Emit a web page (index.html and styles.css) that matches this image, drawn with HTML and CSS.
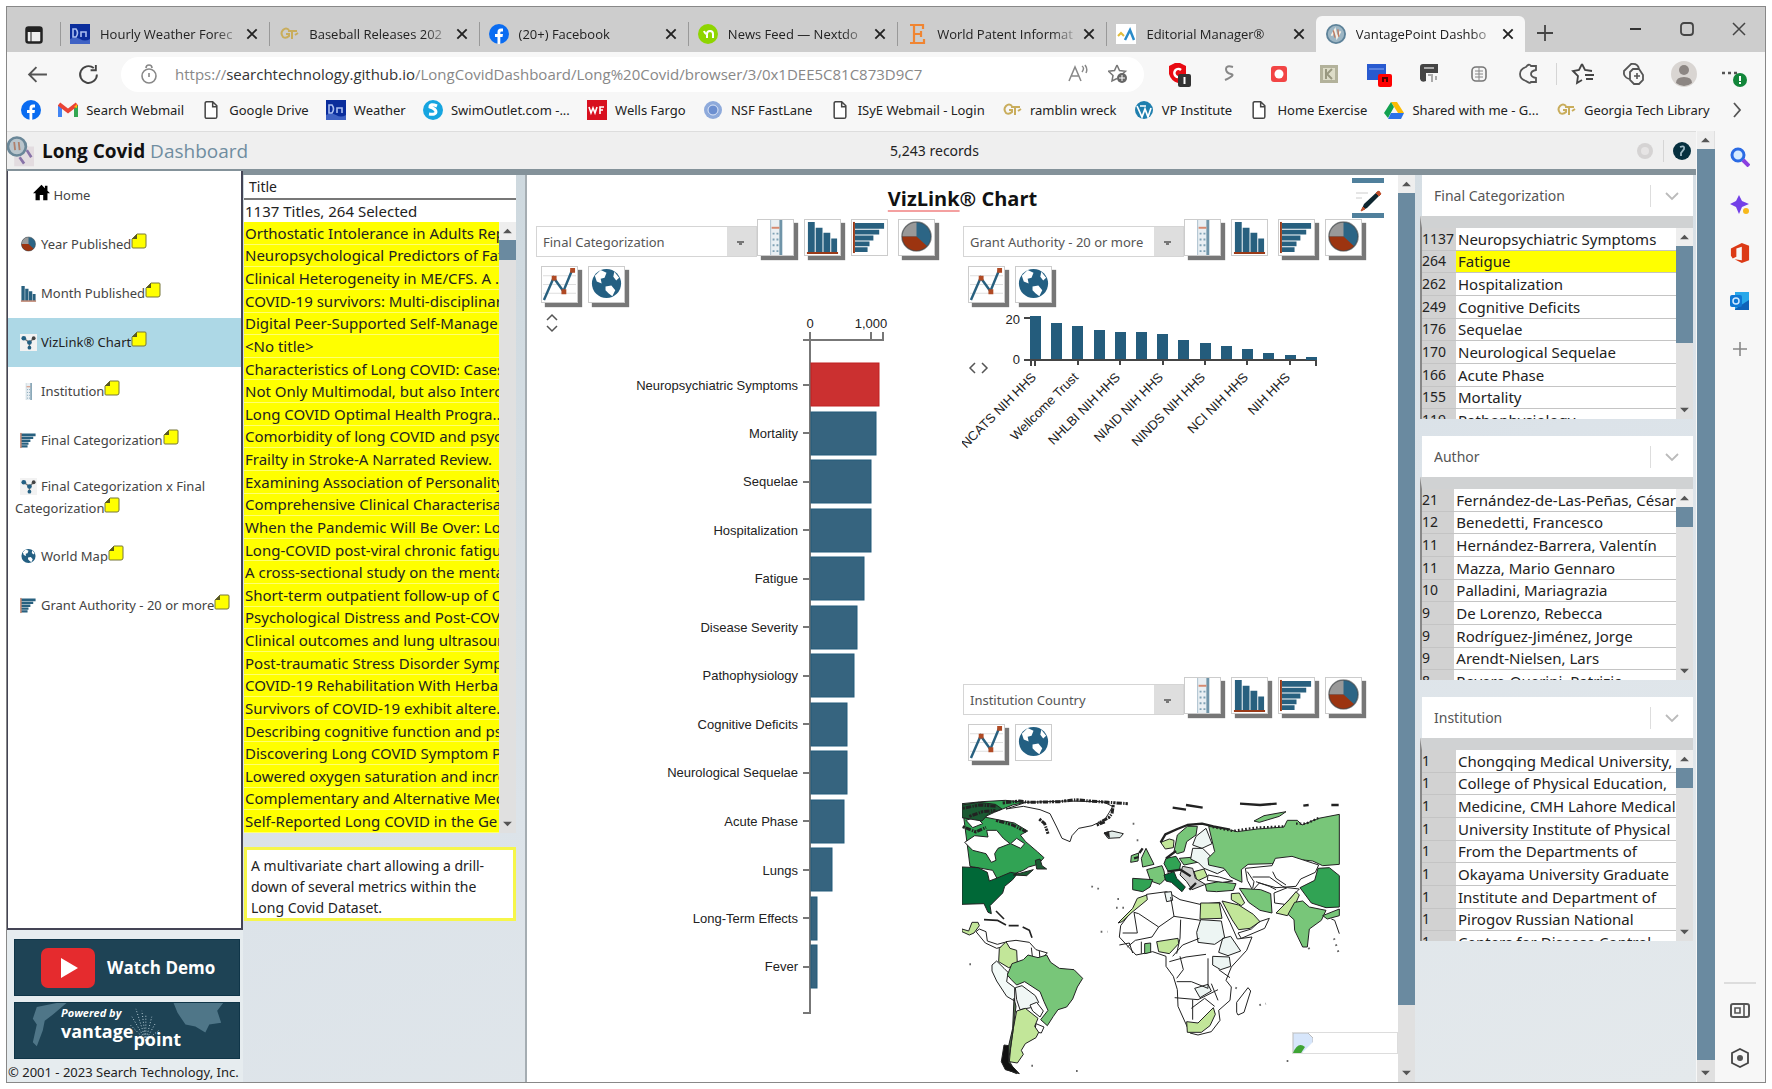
FILE: index.html
```html
<!DOCTYPE html>
<html lang="en">
<head>
<meta charset="utf-8">
<title>VantagePoint Dashboard</title>
<link rel="stylesheet" href="styles.css">
</head>
<body>
<svg class="defs" aria-hidden="true">
  <symbol id="x" viewBox="0 0 12 12"><path d="M2 2l8 8M10 2l-8 8" stroke="#222" stroke-width="1.6"/></symbol>
  <symbol id="doc" viewBox="0 0 20 24"><path d="M4 2h8l5 5v13q0 2-2 2H5q-2 0-2-2V4q0-2 2-2zM12 2v6h5" fill="#fff" stroke="#444" stroke-width="1.8"/></symbol>
  <symbol id="wx" viewBox="0 0 20 20"><path fill="#0a2d9c" d="M0 0h20v20H0z"/><path d="M0 20V15q5-3 10 0t10 0v5z" fill="#3f62c4"/><path d="M3 5v8h3q3-4 0-8zM11 13V8h5v5" fill="none" stroke="#a9bdf0" stroke-width="1.6"/></symbol>
  <symbol id="fb" viewBox="0 0 20 20"><circle cx="10" cy="10" r="10" fill="#0a6cf1"/><path d="M8.500 20v-7H6v-3h2.500V8q0-3.500 3.500-3.500h2v3h-1.500q-1.200 0-1.200 1.200V10H14l-.5 3h-2.200v7z" fill="#fff"/></symbol>
  <symbol id="gt" viewBox="0 0 20 16"><path d="M10 4Q7 1 4 4t0 7q3 2 6-1V8H7M9 5h9M13 5v8M16 9l3-2" fill="none" stroke="#c9ad5c" stroke-width="2"/></symbol>
  <symbol id="vp" viewBox="0 0 22 22"><circle cx="11" cy="11" r="10" fill="#9db6c4" stroke="#5d8299" stroke-width="2"/><path d="M6 13l4-7 2 9 4-7" stroke="#f5efe6" stroke-width="2" fill="none"/><path d="M8 7l2 8M13 6l1 8" stroke="#c07a60" stroke-width="1.500"/></symbol>
  <symbol id="up" viewBox="0 0 10 8"><path d="M1 6l4-4 4 4z" fill="#555"/></symbol>
  <symbol id="down" viewBox="0 0 10 8"><path d="M1 2l4 4 4-4z" fill="#555"/></symbol>
  <symbol id="chev" viewBox="0 0 14 10"><path d="M1 2l6 6 6-6" fill="none" stroke="#bbb" stroke-width="1.800"/></symbol>
  <symbol id="note" viewBox="0 0 16 16"><path d="M6 1h8q1 0 1 1v11q0 2-2 2H2q-1 0-1-1V6z" fill="#ff0" stroke="#77773a"/><path d="M1 6l5-5v5z" fill="#5a5a20"/></symbol>
  <symbol id="list" viewBox="0 0 36 36"><path fill="#fff" d="M0 0h36v36H0z"/><path d="M13 0h10v36H13z" fill="#e9eff3"/><path d="M22 0h3v36h-3z" fill="#6f94a8"/><path d="M13 0v36" stroke="#aac0cc"/><path d="M14 8h8" stroke="#d58a70" stroke-width="2"/><path d="M15 14h6M15 20h6M15 26h6M15 32h6" stroke="#7fa2b5" stroke-width="2" stroke-dasharray="2 2"/></symbol>
  <symbol id="cols" viewBox="0 0 36 36"><path fill="#fff" d="M0 0h36v36H0z"/><path d="M3 2h7v31H3zM11 8h7v25h-7zM19 13h7v20h-7zM27 19h6v14h-6z" fill="#28607f"/><path d="M2 34h32" stroke="#9a3a18" stroke-width="2"/></symbol>
  <symbol id="bars" viewBox="0 0 36 36"><path fill="#fff" d="M0 0h36v36H0z"/><path d="M3 3h30v6H3zM3 10h25v5H3zM3 16h19v5H3zM3 22h15v5H3zM3 28h13v5H3z" fill="#28607f"/><path d="M2 2v32" stroke="#9a3a18" stroke-width="2"/></symbol>
  <symbol id="pie" viewBox="0 0 36 36"><path fill="#fff" d="M0 0h36v36H0z"/><circle cx="18" cy="17" r="15" fill="#2c6585"/><path d="M18 17V2A15 15 0 0 0 3 17z" fill="#999"/><path d="M18 17H3A15 15 0 0 0 29 27z" fill="#9c3410"/><circle cx="18" cy="17" r="15" fill="none" stroke="#444" stroke-opacity=".6" stroke-width="1.500"/></symbol>
  <symbol id="line" viewBox="0 0 36 36"><path fill="#fff" d="M0 0h36v36H0z"/><path d="M1 9h34M1 18h34M1 27h34" stroke="#ddd"/><path d="M2 34L12 11l10 14L31 3" fill="none" stroke="#28607f" stroke-width="2.500"/><path d="M10 9h5v5h-5zM20 23h5v5h-5zM29 1h5v5h-5z" fill="#b04a24"/></symbol>
  <symbol id="globe" viewBox="0 0 36 36"><path fill="#fff" d="M0 0h36v36H0z"/><circle cx="18" cy="17" r="15" fill="#235f82"/><path d="M6 9l6-6 6 3-2 5-4 1 1 5-5-2zM17 20l6-1 4 5-3 6-4-3-3-3zM26 5l5 6-3 3-3-4z" fill="#fff"/></symbol>
  <symbol id="net" viewBox="0 0 36 36"><path fill="#f2f2f2" d="M0 0h36v36H0z"/><path d="M8 9l12 9 9-9M20 18v11" stroke="#777" stroke-width="3" fill="none"/><circle cx="8" cy="9" r="5" fill="#235f82"/><circle cx="20" cy="18" r="5" fill="#235f82"/><circle cx="29" cy="9" r="4" fill="#444"/><circle cx="20" cy="29" r="4" fill="#235f82"/></symbol>
</svg>

<div class="window">
  <header class="tabbar">
    <svg class="tabactions" viewBox="0 0 18 18"><rect x="1.500" y="1.500" width="15" height="15" rx="2" fill="#eee" stroke="#222" stroke-width="2.500"/><path d="M2 2h14v4H2z" fill="#222"/><path d="M6 6v10" stroke="#222"/></svg>
    <nav class="tabs" aria-label="Browser tabs">
      <a class="tab" href="#"><svg class="i20"><use href="#wx"/></svg><span>Hourly Weather Forec</span><svg class="i12"><use href="#x"/></svg></a>
      <a class="tab" href="#"><svg class="i20"><use href="#gt"/></svg><span>Baseball Releases 202</span><svg class="i12"><use href="#x"/></svg></a>
      <a class="tab" href="#"><svg class="i20"><use href="#fb"/></svg><span>(20+) Facebook</span><svg class="i12"><use href="#x"/></svg></a>
      <a class="tab" href="#"><svg class="i20" viewBox="0 0 20 20"><circle cx="10" cy="10" r="10" fill="#8ed500"/><path d="M6 7q1 3 3 3v4M9 10q0-3 3-3t3 3v4" fill="none" stroke="#fff" stroke-width="2"/></svg><span>News Feed — Nextdo</span><svg class="i12"><use href="#x"/></svg></a>
      <a class="tab" href="#"><svg class="i20" viewBox="0 0 20 20"><path d="M3 1h13v4M3 19h14v-4M7 1v18M7 10h7M14 7v6" fill="none" stroke="#f08532" stroke-width="2.200"/></svg><span>World Patent Informat</span><svg class="i12"><use href="#x"/></svg></a>
      <a class="tab" href="#"><svg class="i20" viewBox="0 0 20 20"><path fill="#fff" d="M0 0h20v20H0z"/><path d="M2 12l3-3 3 3" stroke="#e2bd3b" stroke-width="2" fill="none"/><path d="M9 16l5-10 4 10" stroke="#2a8bc9" stroke-width="2.500" fill="none"/></svg><span>Editorial Manager®</span><svg class="i12"><use href="#x"/></svg></a>
      <a class="tab active" href="#" aria-current="page"><svg class="i20"><use href="#vp"/></svg><span>VantagePoint Dashbo</span><svg class="i12"><use href="#x"/></svg></a>
    </nav>
    <div class="wincontrols">
      <button aria-label="New tab"><svg viewBox="0 0 16 16"><path d="M8 0v16M0 8h16" stroke="#444" stroke-width="1.800"/></svg></button>
      <span class="grow"></span>
      <button aria-label="Minimize"><svg viewBox="0 0 16 16"><path d="M3 8h11" stroke="#333" stroke-width="2"/></svg></button>
      <button aria-label="Maximize"><svg viewBox="0 0 16 16"><rect x="2" y="2" width="12" height="12" rx="3" fill="none" stroke="#444" stroke-width="1.800"/></svg></button>
      <button aria-label="Close"><svg viewBox="0 0 16 16"><path d="M2 2l12 12M14 2L2 14" stroke="#444" stroke-width="1.500"/></svg></button>
    </div>
  </header>

  <div class="toolbar">
    <button aria-label="Back"><svg viewBox="0 0 20 20"><path d="M19 10H2M9 3l-7 7 7 7" fill="none" stroke="#555" stroke-width="1.800"/></svg></button>
    <button aria-label="Reload"><svg viewBox="0 0 20 20"><path d="M18 10a8 8 0 1 1-3-6.200M17 1v5h-5" fill="none" stroke="#444" stroke-width="1.800"/></svg></button>
    <div class="url">
      <svg class="i20" viewBox="0 0 20 20"><circle cx="10" cy="12" r="7" fill="none" stroke="#888" stroke-width="1.600"/><path d="M7 4q0-3 3-3t3 3M10 9v4" fill="none" stroke="#888" stroke-width="1.600"/></svg>
      <div class="address" role="textbox" aria-label="Address">https://<b>searchtechnology.github.io</b>/LongCovidDashboard/Long%20Covid/browser/3/0x1DEE5C81C873D9C7</div>
      <svg class="i20" viewBox="0 0 20 20"><path d="M1 17L7 3l6 14M3 12h8M14 2q3 2 0 6M17 1q3 4 1 8" fill="none" stroke="#888" stroke-width="1.500"/></svg>
      <svg class="i20" viewBox="0 0 20 20"><path d="M9 1l2.500 5.500 6 .8-4.500 4M9 1L6.500 6.500l-6 .8 4.500 4.200L4 17l5-2.500" fill="none" stroke="#777" stroke-width="1.500"/><circle cx="14" cy="14" r="5" fill="#666"/><path d="M14 11v6M11 14h6" stroke="#fff"/></svg>
    </div>
    <div class="extensions">
      <svg viewBox="0 0 26 26"><path d="M3 5l6-3h5l6 3v8q-2 7-8 9-7-2-9-9z" fill="#e80a12"/><path d="M15 9a4 4 0 1 0 0 6" fill="none" stroke="#fff" stroke-width="2.500"/><rect x="12" y="13" width="13" height="13" rx="2" fill="#333"/><path d="M18.500 16v7" stroke="#fff" stroke-width="2"/></svg>
      <svg viewBox="0 0 26 26"><path d="M17 6q-7-2-7 2t5 5-6 6" fill="none" stroke="#888" stroke-width="2"/></svg>
      <svg viewBox="0 0 26 26"><rect x="5" y="5" width="16" height="16" rx="3" fill="#f24545"/><circle cx="13" cy="13" r="4.500" fill="#fff"/></svg>
      <svg viewBox="0 0 26 26"><rect x="4" y="4" width="18" height="18" fill="#b3b29b"/><path d="M7 7h12v12H7z" fill="#dddcc8"/><path d="M10 8v10M16 8l-5 5 5 5" fill="none" stroke="#999880" stroke-width="2"/></svg>
      <svg viewBox="0 0 26 26"><path d="M1 3h19v16H1z" fill="#285ad0"/><path d="M3 8h15" stroke="#89a8ef"/><rect x="12" y="13" width="14" height="13" rx="2" fill="#f00"/><path d="M17 21v-4h4v4" fill="none" stroke="#500" stroke-width="2"/></svg>
      <svg viewBox="0 0 26 26"><path d="M4 6q0-3 3-3h15v9H10v8q-5 2-6-2z" fill="#444"/><path d="M8 7h10M12 14h4v7M20 15v4" stroke="#aaa" stroke-width="2" fill="none"/></svg>
      <svg viewBox="0 0 26 26"><rect x="6" y="6" width="14" height="14" rx="4" fill="none" stroke="#777" stroke-width="1.600"/><path d="M9 10h8M9 13h8M9 16h8M13 6v14" stroke="#888"/></svg>
      <svg viewBox="0 0 26 26"><path d="M20 5h-5q-2-3-5 1Q4 8 4 13t6 7q4 3 5 1h5v-4q-5-1-5-4t5-4z" fill="none" stroke="#555" stroke-width="1.800"/></svg>
      <i class="vsep"></i>
      <svg viewBox="0 0 26 26"><path d="M11 3l3 6 7 1M11 3L8 9l-6 1 5 5-1 7 5-3M14 14h9M15 18h7" fill="none" stroke="#444" stroke-width="1.800"/></svg>
      <svg viewBox="0 0 26 26"><path d="M8 18q-6-2-5-8l7-7q7-1 8 5M9 11l3-3h6l4 6v5l-4 4h-5l-4-4z" fill="none" stroke="#555" stroke-width="1.800"/><path d="M16 12v6M13 15h6" stroke="#555" stroke-width="1.600"/></svg>
      <svg viewBox="0 0 26 26"><circle cx="13" cy="13" r="13" fill="#d9d5d2"/><circle cx="13" cy="9" r="5" fill="#8c8683"/><path d="M5 22q0-6 8-6t8 6q-8 6-16 0z" fill="#8c8683"/></svg>
      <svg viewBox="0 0 26 26"><path d="M1 12h3M7 12h3M13 12h3" stroke="#555" stroke-width="2.500"/><circle cx="19" cy="19" r="7" fill="#12863a"/><path d="M19 15v5M19 21v2" stroke="#fff" stroke-width="2"/></svg>
    </div>
  </div>

  <nav class="bookmarks" aria-label="Bookmarks">
    <a href="#" aria-label="Facebook"><svg class="i20"><use href="#fb"/></svg></a>
    <a href="#"><svg class="i20" viewBox="0 0 20 20"><path d="M2 17V5" stroke="#4285f4" stroke-width="4"/><path d="M18 17V5" stroke="#34a853" stroke-width="4"/><path d="M1 4l9 7 9-7" fill="none" stroke="#ea4335" stroke-width="4"/><path d="M16 7l3-3v4z" fill="#fbbc04"/></svg>Search Webmail</a>
    <a href="#"><svg class="i20"><use href="#doc"/></svg>Google Drive</a>
    <a href="#"><svg class="i20"><use href="#wx"/></svg>Weather</a>
    <a href="#"><svg class="i20" viewBox="0 0 20 20"><circle cx="10" cy="10" r="10" fill="#16a5e0"/><path d="M14 6q-7-3-7 1 6 2 6 5t-7 2" stroke="#fff" stroke-width="3" fill="none"/></svg>SwimOutlet.com -...</a>
    <a href="#"><svg class="i20" viewBox="0 0 20 20"><path fill="#d8101f" d="M0 0h20v20H0z"/><path d="M2 7l2 6 2-5 2 5 2-6M13 14V7h4M13 10h3" fill="none" stroke="#fff" stroke-width="1.600"/></svg>Wells Fargo</a>
    <a href="#"><svg class="i20" viewBox="0 0 20 20"><circle cx="10" cy="10" r="9" fill="#8eaadb"/><circle cx="10" cy="10" r="5" fill="#6c8fd0" stroke="#dce6f8"/></svg>NSF FastLane</a>
    <a href="#"><svg class="i20"><use href="#doc"/></svg>ISyE Webmail - Login</a>
    <a href="#"><svg class="i20"><use href="#gt"/></svg>ramblin wreck</a>
    <a href="#"><svg class="i20" viewBox="0 0 20 20"><circle cx="10" cy="10" r="9" fill="#1f7fae"/><path d="M3 6l5 11 3-8 3 8 3-9M6 6h6" fill="none" stroke="#fff" stroke-width="1.700"/></svg>VP Institute</a>
    <a href="#"><svg class="i20"><use href="#doc"/></svg>Home Exercise</a>
    <a href="#"><svg class="i20" viewBox="0 0 20 20"><path d="M7 2h6l7 11h-6z" fill="#fbbc04"/><path d="M7 2l3 5-6 11-4-5z" fill="#12a150"/><path d="M7 13h13l-3 6H4z" fill="#2a72e8"/></svg>Shared with me - G...</a>
    <a href="#"><svg class="i20"><use href="#gt"/></svg>Georgia Tech Library</a>
    <button aria-label="More bookmarks"><svg class="i20" viewBox="0 0 20 20"><path d="M7 3l6 7-6 7" fill="none" stroke="#555" stroke-width="1.800"/></svg></button>
  </nav>

  <div class="viewport">
    <div class="app">
      <header class="apphead">
        <svg class="logo" viewBox="0 0 30 34"><path d="M8 12h22v22H8z" fill="#e3dce0"/><path d="M14 24l5 7M22 16l5 8" stroke="#8873a8" stroke-width="3"/><circle cx="11" cy="12" r="10" fill="#b9c5cc" stroke="#6a8798" stroke-width="3"/><path d="M8 7l1 9M13 7l1 9" stroke="#b0806c" stroke-width="2"/></svg>
        <h1>Long Covid <span>Dashboard</span></h1>
        <p class="records">5,243 records</p>
        <svg class="i20" viewBox="0 0 20 20"><circle cx="10" cy="10" r="8" fill="#d5d3d3"/><circle cx="10" cy="10" r="4" fill="#e6e4e4"/></svg>
        <i class="vsep"></i>
        <svg class="i20" viewBox="0 0 20 20"><circle cx="10" cy="10" r="9" fill="#06303f"/><path d="M8 6q5-2 4 2l-3 4v3" fill="none" stroke="#9db9c4" stroke-width="1.800"/></svg>
      </header>

      <div class="columns">
        <aside class="left">
          <nav class="menu" aria-label="Views">
            <a class="home" href="#"><svg viewBox="0 0 20 18"><path d="M10 0l4 4V1h3v6l3 3h-3v8h-5v-6H8v6H3v-8H0z" fill="#000"/></svg> Home</a>
            <a href="#"><svg><use href="#pie"/></svg>Year Published<svg class="note"><use href="#note"/></svg></a>
            <a href="#"><svg><use href="#cols"/></svg>Month Published<svg class="note"><use href="#note"/></svg></a>
            <a class="current" href="#"><svg><use href="#net"/></svg>VizLink® Chart<svg class="note"><use href="#note"/></svg></a>
            <a href="#"><svg><use href="#list"/></svg>Institution<svg class="note"><use href="#note"/></svg></a>
            <a href="#"><svg><use href="#bars"/></svg>Final Categorization<svg class="note"><use href="#note"/></svg></a>
            <a class="two" href="#"><svg><use href="#net"/></svg>Final Categorization x Final Categorization<svg class="note"><use href="#note"/></svg></a>
            <a href="#"><svg><use href="#globe"/></svg>World Map<svg class="note"><use href="#note"/></svg></a>
            <a href="#"><svg><use href="#bars"/></svg>Grant Authority - 20 or more<svg class="note"><use href="#note"/></svg></a>
          </nav>
          <a class="banner" href="#"><svg viewBox="0 0 54 40"><rect width="54" height="40" rx="7" fill="#e52b2e"/><path d="M20 10l17 10-17 10z" fill="#fff"/></svg>Watch Demo</a>
          <a class="banner powered" href="#">
            <svg class="art" viewBox="0 0 226 56" preserveAspectRatio="none"><path d="M160 0h50l-6 8 4 12-12 2-4 8-10-6-10-2-8-12zM22 4l20-4h10L38 12l-8 6-2 10-6 16-4-4 4-18-4-6z" fill="#4f7688"/><g stroke="#b8ccd5" stroke-dasharray="1 2"><path d="M132 38L122 6M132 38l-4-30M132 38V12M132 38l6-24M132 38l10-18M132 38L118 14M132 38l-16-16M132 38l13-10"/></g></svg>
            <span class="by">Powered by</span><span class="vant">vantage<span>point</span></span>
          </a>
          <small>© 2001 - 2023 Search Technology, Inc.</small>
        </aside>

        <section class="titles">
          <h2>Title</h2>
          <p class="count">1137 Titles, 264 Selected</p>
          <div class="scroller">
            <ul>
              <li>Orthostatic Intolerance in Adults Rep</li><li>Neuropsychological Predictors of Fat</li><li>Clinical Heterogeneity in ME/CFS. A ..</li><li>COVID-19 survivors: Multi-disciplinar</li><li>Digital Peer-Supported Self-Manage</li><li>&lt;No title&gt;</li><li>Characteristics of Long COVID: Cases</li><li>Not Only Multimodal, but also Interc</li><li>Long COVID Optimal Health Progra..</li><li>Comorbidity of long COVID and psyc</li><li>Frailty in Stroke-A Narrated Review.</li><li>Examining Association of Personality</li><li>Comprehensive Clinical Characterisa</li><li>When the Pandemic Will Be Over: Lo</li><li>Long-COVID post-viral chronic fatigu</li><li>A cross-sectional study on the menta</li><li>Short-term outpatient follow-up of C</li><li>Psychological Distress and Post-COV</li><li>Clinical outcomes and lung ultrasour</li><li>Post-traumatic Stress Disorder Symp</li><li>COVID-19 Rehabilitation With Herba</li><li>Survivors of COVID-19 exhibit altere..</li><li>Describing cognitive function and ps</li><li>Discovering Long COVID Symptom P</li><li>Lowered oxygen saturation and incre</li><li>Complementary and Alternative Med</li><li>Self-Reported Long COVID in the Ge</li>
            </ul>
            <div class="sb"><svg><use href="#up"/></svg><i class="thumb t20"></i><svg><use href="#down"/></svg></div>
          </div>
          <p class="desc">A multivariate chart allowing a drill-down of several metrics within the Long Covid Dataset.</p>
        </section>

        <main class="main">
          <div class="canvas">
            <h2><u>VizLink</u>® Chart</h2>
            <button class="edit" aria-label="Edit"><svg viewBox="0 0 32 40"><path fill="#fff" d="M0 0h32v40H0z"/><path d="M0 0h32v5H0zM0 35h32v5H0z" fill="#50809c"/><path d="M4 15h12M4 20h6" stroke="#ccc"/><path d="M9 33l3-7L26 13l3 3-14 14z" fill="#0e2630"/><path d="M24 15l3-2 2 3-2 2zM9 33l2-4 2 2z" fill="#c0502c" stroke="#c0502c"/></svg></button>
            <div class="widgets">
              <section class="widget tall">
                <div class="tools">
                  <select aria-label="Left field"><option>Final Categorization</option></select>
                  <button aria-label="List"><svg><use href="#list"/></svg></button><button aria-label="Column chart"><svg><use href="#cols"/></svg></button><button class="on" aria-label="Bar chart"><svg><use href="#bars"/></svg></button><button aria-label="Pie chart"><svg><use href="#pie"/></svg></button><button aria-label="Line chart"><svg><use href="#line"/></svg></button><button aria-label="Map"><svg><use href="#globe"/></svg></button>
                </div>
                <svg class="chart" width="420" height="710" viewBox="535 310 420 710">
                  <path d="M547 322l5-5 5 5M547 328l5 5 5-5" fill="none" stroke="#555" stroke-width="1.500"/>
                  <path d="M803 342h80v-8M871 342v-8M810 334v681h-7" fill="none" stroke="#777" stroke-width="2"/>
                  <g fill="#36647f" stroke="#235a7a" stroke-width="1">
                    <rect x="811" y="365" width="68" height="43" fill="#cb3030" stroke="#c02020"/><rect x="811" y="414" width="65" height="43"/><rect x="811" y="462" width="60" height="43"/><rect x="811" y="511" width="60" height="43"/><rect x="811" y="559" width="53" height="43"/><rect x="811" y="608" width="46" height="43"/><rect x="811" y="656" width="43" height="43"/><rect x="811" y="705" width="36" height="43"/><rect x="811" y="753" width="36" height="43"/><rect x="811" y="802" width="33" height="43"/><rect x="811" y="850" width="21" height="43"/><rect x="811" y="899" width="6" height="43"/><rect x="811" y="947" width="6" height="43"/>
                  </g>
                  <path d="M803 387h7M803 435h7M803 484h7M803 532h7M803 581h7M803 629h7M803 678h7M803 726h7M803 775h7M803 823h7M803 872h7M803 920h7M803 969h7" stroke="#777" stroke-width="2"/>
                  <g class="lbl"><text x="810" y="330" text-anchor="middle">0</text><text x="871" y="330" text-anchor="middle">1,000</text></g>
                  <g class="lbl" text-anchor="end"><text x="798" y="392">Neuropsychiatric Symptoms</text><text x="798" y="440">Mortality</text><text x="798" y="488">Sequelae</text><text x="798" y="537">Hospitalization</text><text x="798" y="585">Fatigue</text><text x="798" y="634">Disease Severity</text><text x="798" y="682">Pathophysiology</text><text x="798" y="731">Cognitive Deficits</text><text x="798" y="779">Neurological Sequelae</text><text x="798" y="828">Acute Phase</text><text x="798" y="877">Lungs</text><text x="798" y="925">Long-Term Effects</text><text x="798" y="973">Fever</text></g>
                </svg>
              </section>
              <section class="widget">
                <div class="tools">
                  <select aria-label="Top right field"><option>Grant Authority - 20 or more</option></select>
                  <button aria-label="List"><svg><use href="#list"/></svg></button><button class="on" aria-label="Column chart"><svg><use href="#cols"/></svg></button><button aria-label="Bar chart"><svg><use href="#bars"/></svg></button><button aria-label="Pie chart"><svg><use href="#pie"/></svg></button><button aria-label="Line chart"><svg><use href="#line"/></svg></button><button aria-label="Map"><svg><use href="#globe"/></svg></button>
                </div>
                <svg class="chart" width="400" height="150" viewBox="963 310 400 150">
                  <path d="M976 365l-5 5 5 5M983 365l5 5-5 5" fill="none" stroke="#555" stroke-width="1.500"/>
                  <path d="M1025 320h8M1025 362h292v6M1032 362v6M1036 362v6M1079 362v5M1121 362v5M1164 362v5M1206 362v5M1248 362v5M1291 362v5" fill="none" stroke="#444" stroke-width="2"/>
                  <path fill="#245c7c" d="M1031 318h11v43h-11zM1052 325h11v36h-11zM1073 328h11v33h-11zM1095 332h11v29h-11zM1116 334h11v27h-11zM1137 334h11v27h-11zM1158 336h11v25h-11zM1179 342h11v19h-11zM1201 345h11v16h-11zM1222 348h11v13h-11zM1243 351h11v10h-11zM1264 355h11v6h-11zM1286 357h11v4h-11zM1307 359h11v3h-11z"/>
                  <g class="lbl" text-anchor="end"><text x="1021" y="326">20</text><text x="1021" y="366">0</text>
                  <text transform="translate(1038 380) rotate(-45)">NCATS NIH HHS</text><text transform="translate(1080 380) rotate(-45)">Wellcome Trust</text><text transform="translate(1122 380) rotate(-45)">NHLBI NIH HHS</text><text transform="translate(1165 380) rotate(-45)">NIAID NIH HHS</text><text transform="translate(1207 380) rotate(-45)">NINDS NIH HHS</text><text transform="translate(1250 380) rotate(-45)">NCI NIH HHS</text><text transform="translate(1292 380) rotate(-45)">NIH HHS</text></g>
                </svg>
              </section>
              <section class="widget">
                <div class="tools">
                  <select aria-label="Bottom right field"><option>Institution Country</option></select>
                  <button aria-label="List"><svg><use href="#list"/></svg></button><button aria-label="Column chart"><svg><use href="#cols"/></svg></button><button aria-label="Bar chart"><svg><use href="#bars"/></svg></button><button aria-label="Pie chart"><svg><use href="#pie"/></svg></button><button aria-label="Line chart"><svg><use href="#line"/></svg></button><button class="on" aria-label="Map"><svg><use href="#globe"/></svg></button>
                </div>
                <svg class="map" width="378" height="283" viewBox="68 410 1134 849">
                  <g stroke="#222" stroke-width="3" stroke-linejoin="round" fill="#fff">
                    <!-- North America -->
                    <path fill="#31a354" d="M68 436l60-6 70-4 62 6-40 8-30 12-25 10-30 14 40 8 50 10 40 24-22 12 16 20 35 30 20 18-18 20-28 8-16 10-32 12-24 8-20 10-16-30-68-12z"/>
                    <path d="M76 552l30-20 40 4-4-20 30 0 20 24 20 16-36 14-10 16 4 20-14 6-16-26-40-10zM80 486l30-10 20 20-30 12zM232 540l24 16-12 14-30-14z"/>
                    <path fill="#006837" d="M68 626l48 2 28 14 6 26 26-10 38-16 20 4-14 18-24 20-6 20-24 24-14 14 4 24-10-4-12-26-66 2z"/>
                    <path fill="#1a5a32" d="M288 606l14-4 6 20 14 10-30 0zM68 440l50-8 50 6 20 14-40 14-20 22-60-10zM222 650l60-16-20 18z"/>
                    <path d="M200 452l60-20 120-4 110 2 30 14-10 18-14 22-38 18-40 8-20 22-6 18-24-10-16-34-20-40-30-12-50-10z"/>
                    <path fill="none" stroke-width="9" stroke-dasharray="7 3 16 4 4 3" d="M190 434l50-6 30 4 90-2 50-6 40 4 56 4 60 4M70 450l50-10 50 4M90 474l40-14 40-4M70 505l40 16 30-14M170 486l50 14 40 20M300 482l16 14 10 30M522 440l-4 26-10 12-30 16M472 500l26-10"/>
                    <path d="M494 524l24-6 34 8-10 12-36 2z" fill="#e2ece9"/><path d="M494 524l14-4 2 18z" fill="#222"/>
                    <!-- Central America -->
                    <path fill="none" stroke-width="5" d="M134 784l40 2 26 14M170 758l24 24M208 802l30 0M250 806l20 10 8 22"/>
                    <path fill="#c2e699" d="M68 812l20 6 10-26 18 0 4 10-16 22-14 6-22-10z"/>
                    <path d="M120 812l20 8 4 28 30 10 22-6-2 12-22 6-34-16-28-34z"/>
                    <!-- South America -->
                    <path d="M200 850l30-4 40 6 20 22 34 10-28 26-42 4-30-6-24-26zM276 868l4 34M300 878l2 26"/>
                    <path fill="#c2e699" d="M180 870l20-20 12 20 20 6 2 40-26 12-30-18z"/>
                    <path fill="#f3faf8" d="M158 920l14-12 22 22 12 12-4 28 24 18 0 40-24-14-30-46-14-30z"/>
                    <path fill="#f0f7f5" d="M228 988l20-6 40 30 10 20-24 16-32 6-10-30z"/>
                    <path fill="#78c679" d="M204 950l14-34 34-12 14-14 30 8 26-8 12 22 26 18 44 4 26 26-16 26-14 36-18 24-26 8-14 20-18 28-20-18 22-28-12-26-12-30-46-30-24 10-16-16z"/>
                    <path d="M272 1040l20-8 20 26-10 18-22-18zM290 1096l24 10-8 18-20-4z"/>
                    <path fill="#c2e699" d="M232 1058l26-8 38 30-10 24 12 18-8 16-32 18-12 20 6 12-18 26-24-4 4-40 8-60z"/>
                    <path d="M224 1020l-4 90-16 70-12 40 12 14 28 12-10-16-14-26 12-80 10-80z" fill="#557650"/><path d="M194 1160l-8 50 12 24 42 12-32-34 0-50z" fill="#111"/>
                    <!-- Europe -->
                    <path fill="#31a354" d="M674 616l6-16 30-6 14 22-4 20-34 2z"/>
                    <path fill="#78c679" d="M622 634l46-12 6 16 4 24-16 16-28-10zM606 600l14-30 24 48-34 8zM576 592l22-8-2 24-22 4z"/>
                    <path fill="#31a354" d="M580 660l60 4-8 22-22 14-30-6z"/>
                    <path fill="#006837" d="M674 650l30-10 8 20 26 26-10 14-32-28-16-4z"/>
                    <path fill="#78c679" d="M704 580l10-50 30-26 30 0-4 26-28 20-8 30-20 6zM720 600l46-4 8 16-40 8z"/><path fill="#c2e699" d="M664 552l26-10 14 4-2 22-24 4zM764 640l30-8 10 22-30 14z"/>
                    <path d="M770 534l30-24 18 46-30 14-28-10zM760 570l30 0 30 30 44 30-30 16-40-16-16-16-24-12z" fill="#eef6f4"/>
                    <path d="M730 624l30 6 8 30 30 18-40 16-16-24-20-20z" fill="#ccc"/><path fill="none" stroke-width="7" d="M664 552l14-24 36-16 30-12 44-4 34 8 50 10M600 584l10-14M684 640l40-6 30 20M680 600l30-22M750 694l20-20M584 600l14-4M740 440l50 8M700 448l40 6M902 436l60 4 50-4M1176 440l22 0M1092 442l16-2"/>
                    <path fill="#78c679" d="M798 678l40-8 52 6-8 20-50 4-30-2z"/>
                    <path d="M806 650l34 6 40 12-30 4-46-6z"/>
                    <!-- Asia -->
                    <path fill="#78c679" d="M808 504l60 10 26 6 60-8 80-6 10-20 30 0 14 14 50-20 62-12v150l-50 4-30-14-54-6-70 14-70 2-20 16 2 38-34-16-20-26-46-10-2-20 20-20z"/>
                    <path fill="none" stroke-width="7" stroke-dasharray="5 6" d="M820 506l60 12 70-10 84-4M1070 496l30 0 40-18"/>
                    <path fill="#78c679" d="M944 488l30-16 66-12-20 14-60 18z"/>
                    <path d="M918 630l80-8 10-22 50-6 80 26-10 22-44 20-14 22-60 4-50-14-20 22-16-30z"/>
                    <path fill="none" d="M940 656l50 0 40 28 20 8M1000 640l10 20 30 20M950 670l40 14 20 10M924 640l20 30-4 20"/>
                    <path d="M1004 704l40-16 36 4-44 46-30-4z"/>
                    <path fill="#31a354" d="M1082 688l44-22 10-36 34-2 30 24v94l-40 2-44-14z"/>
                    <path fill="#78c679" d="M900 690l64 4 30 12 4 58-36-8-34-24z"/>
                    <path fill="#c2e699" d="M1010 764l40-40 20-24 10 10-14 32-22 30zM876 706l24-2 16 30-10 8-30-18zM848 728l50 12 44 28 20 22-30 20-34 4-20-30z"/>
                    <path fill="#78c679" d="M1046 768l20-36 24-4 20 18 50 10-14 30-36 26-6 54-14 0-24-50-2-32z"/>
                    <path fill="#78c679" d="M1150 772l50-20v20l-36 10z"/><path d="M960 790l30-10-14 30-70 30-10-16 40-12zM1176 782l10 4 14 40" fill="none"/>
                    <!-- Africa -->
                    <path d="M568 770l54-62 60-8 40 24 60 14 60-6 30 60 22 50 44-6-16 40-46 50-16 40 16 20-4 40-34 30 4 30-26 34-40 10-24-6-36-80-2-50-12-40-22-30 0-30-40-14-50 10-50-54 4-34z"/>
                    <path fill="#c2e699" d="M536 794l44-44 14-30 28-10 2 14-46 38-30 28zM784 734l56 0 8 46-66 2zM652 850l64-10 2 16-28 30-32-6z"/>
                    <path fill="#78c679" d="M616 856l18-2 0 28-18 4z"/>
                    <path fill="#edf5f3" d="M784 784l62 4 10 50-30 20-50-6-4-30zM850 840l24-6 30 44-38 14-28-10zM820 894l50 2 4 28-30 10-24-14zM766 990l40-12 10 20-34 20zM676 702l20-2 4 26-18 4z"/>
                    <path fill="none" d="M694 716l10 58-46 32-60-40-14-4 10 62-44 0M658 806l-20 30-50 10-24 20M704 774l80 12M724 784l-2 56-10 46M780 840l-50 20-30 34M540 860l30-6 10 30M606 850l0 36M690 910l50-14 60-8M722 894l10 40-20 26M806 900l0 90-50-20-44 0M706 1018l70 6 60-30M760 1024l0 60M838 934l34 24M756 1050l40-30 30 24M816 976l20 50"/>
                    <path fill="#c2e699" d="M742 1090l34 4 46-46 6 20-16 34-26 20-42 0z"/>
                    <path d="M892 1062l0-30 34-44 8 10-20 64-18 8z"/>
                    <!-- Islands -->
                    <path fill="none" stroke="#666" stroke-width="6" stroke-dasharray="5 14" d="M456 684l30 10M580 496h6M592 546h8M530 748h30M484 820h20M90 918h14M960 1040l20-4M888 988l14 6M1108 868l4 12M1184 840l14 44M276 1222h16M410 1238h12M1042 1208h12M534 722h6"/>
                  </g>
                </svg>
              </section>
            </div>
            <div class="legend" role="img" aria-label="Missing picture"><svg viewBox="0 0 20 20"><path d="M0 0h15l5 5v15H0z" fill="#d7e6fb" stroke="#bbb"/><path d="M0 20q5-12 12-6L8 20z" fill="#3fa535"/><path d="M20 9L9 20h11z" fill="#fff"/></svg></div>
          </div>
          <div class="sb wide"><svg><use href="#up"/></svg><i class="thumb t832"></i><svg><use href="#down"/></svg></div>
        </main>

        <aside class="right">
          <section>
            <div class="pick"><select aria-label="First list field"><option>Final Categorization</option></select><svg><use href="#chev"/></svg></div>
            <div class="scroller">
              <table><tr><th>1137</th><td>Neuropsychiatric Symptoms</td></tr><tr class="hit"><th>264</th><td>Fatigue</td></tr><tr><th>262</th><td>Hospitalization</td></tr><tr><th>249</th><td>Cognitive Deficits</td></tr><tr><th>176</th><td>Sequelae</td></tr><tr><th>170</th><td>Neurological Sequelae</td></tr><tr><th>166</th><td>Acute Phase</td></tr><tr><th>155</th><td>Mortality</td></tr><tr><th>119</th><td>Pathophysiology</td></tr></table>
              <div class="sb"><svg><use href="#up"/></svg><i class="thumb t97"></i><svg><use href="#down"/></svg></div>
            </div>
          </section>
          <section>
            <div class="pick"><select aria-label="Second list field"><option>Author</option></select><svg><use href="#chev"/></svg></div>
            <div class="scroller">
              <table><tr><th>21</th><td>Fernández-de-Las-Peñas, César</td></tr><tr><th>12</th><td>Benedetti, Francesco</td></tr><tr><th>11</th><td>Hernández-Barrera, Valentín</td></tr><tr><th>11</th><td>Mazza, Mario Gennaro</td></tr><tr><th>10</th><td>Palladini, Mariagrazia</td></tr><tr><th>9</th><td>De Lorenzo, Rebecca</td></tr><tr><th>9</th><td>Rodríguez-Jiménez, Jorge</td></tr><tr><th>9</th><td>Arendt-Nielsen, Lars</td></tr><tr><th>8</th><td>Rovere-Querini, Patrizia</td></tr></table>
              <div class="sb"><svg><use href="#up"/></svg><i class="thumb t20"></i><svg><use href="#down"/></svg></div>
            </div>
          </section>
          <section>
            <div class="pick"><select aria-label="Third list field"><option>Institution</option></select><svg><use href="#chev"/></svg></div>
            <div class="scroller">
              <table><tr><th>1</th><td>Chongqing Medical University,</td></tr><tr><th>1</th><td>College of Physical Education,</td></tr><tr><th>1</th><td>Medicine, CMH Lahore Medical</td></tr><tr><th>1</th><td>University Institute of Physical</td></tr><tr><th>1</th><td>From the Departments of</td></tr><tr><th>1</th><td>Okayama University Graduate</td></tr><tr><th>1</th><td>Institute and Department of</td></tr><tr><th>1</th><td>Pirogov Russian National</td></tr><tr><th>1</th><td>Centers for Disease Control</td></tr></table>
              <div class="sb"><svg><use href="#up"/></svg><i class="thumb t20"></i><svg><use href="#down"/></svg></div>
            </div>
          </section>
        </aside>
      </div>
    </div>
    <div class="sb page"><svg><use href="#up"/></svg><i class="thumb fill"></i><svg><use href="#down"/></svg></div>
    <nav class="edgebar" aria-label="Sidebar">
      <button aria-label="Search"><svg viewBox="0 0 20 20"><circle cx="8" cy="8" r="6" fill="#d7ecff" stroke="#2b6be4" stroke-width="3"/><path d="M13 13l6 6" stroke="#8a3fe0" stroke-width="4"/></svg></button>
      <button aria-label="Discover"><svg viewBox="0 0 20 20"><path d="M9 0l3 6 7 3-7 3-3 7-3-7-6-3 6-3z" fill="#7340e8"/><circle cx="16" cy="16" r="3" fill="#f7b91c"/></svg></button>
      <button aria-label="Office"><svg viewBox="0 0 20 22"><path d="M12 0l8 3v16l-8 3-8-4 8 1V4L6 6v9l-4 2-2-3V6z" fill="#dc3a16"/></svg></button>
      <button aria-label="Outlook"><svg viewBox="0 0 20 20"><path d="M5 1h14v17H5z" fill="#28a8ea"/><path d="M5 18l14-9v10H5z" fill="#0f62b8"/><rect y="4" width="12" height="12" rx="2" fill="#0f78d4"/><circle cx="6" cy="10" r="3" fill="none" stroke="#cfe8ff" stroke-width="1.500"/></svg></button>
      <button aria-label="Add"><svg viewBox="0 0 20 20"><path d="M10 3v14M3 10h14" stroke="#888" stroke-width="1.600"/></svg></button>
      <hr>
      <button aria-label="Toggle sidebar"><svg viewBox="0 0 20 20"><rect x="1" y="4" width="18" height="13" rx="2" fill="none" stroke="#555" stroke-width="2"/><path d="M5 8h5v5H5zM14 5v11" stroke="#555" stroke-width="1.600" fill="none"/></svg></button>
      <button aria-label="Settings"><svg viewBox="0 0 20 20"><path d="M10 1l8 4v10l-8 4-8-4V5z" fill="none" stroke="#444" stroke-width="1.800"/><circle cx="10" cy="10" r="3" fill="#555"/></svg></button>
    </nav>
  </div>
</div>
</body>
</html>
```

FILE: styles.css
```css
* { box-sizing: border-box; }
body { margin: 0; padding: 6px; height: 100vh; background: #fff; color: #222; font: 14px/20px "Noto Sans", "Open Sans", sans-serif; }
h1, h2, p, ul { margin: 0; padding: 0; }
a { color: inherit; text-decoration: none; }
button { padding: 0; border: 0; background: none; }
svg { flex: none; }
.defs { position: absolute; width: 0; height: 0; }
.i20 { width: 20px; height: 20px; }
.i12 { width: 14px; height: 14px; }
.grow { flex: 1; }

.window { display: flex; flex-direction: column; height: 100%; border: 1px solid #888; background: #f7f7f7; overflow: hidden; }

/* Browser chrome */
.tabbar { display: flex; flex: none; height: 45px; padding-top: 9px; background: #cdcdcd; }
.tabactions { width: 18px; height: 18px; margin: 10px 17px 0 18px; }
.tabs { display: flex; flex: 1; min-width: 0; }
.tab { display: flex; flex: 1 1 0; align-items: center; gap: 10px; min-width: 0; padding: 0 10px; font: 14px/20px "Open Sans", sans-serif; }
.tab::before { content: ""; width: 1px; height: 24px; margin: 0 -1px 0 -10px; background: #999; }
.tab span { flex: 1; min-width: 0; margin-right: -8px; overflow: hidden; white-space: nowrap; font-size: 13px; -webkit-mask: linear-gradient(90deg, #000 80%, transparent); mask: linear-gradient(90deg, #000 80%, transparent); }
.tab.active { border-radius: 6px 6px 0 0; background: #f7f7f7; }
.tab.active::before { background: none; }
.wincontrols { display: flex; flex: none; width: 240px; gap: 36px; padding: 0 18px 10px 12px; align-items: center; }
.wincontrols svg { display: block; width: 16px; height: 16px; }
.wincontrols button:first-child { padding-top: 8px; }
.toolbar { display: flex; flex: none; align-items: center; height: 44px; padding-left: 20px; }
.toolbar button { margin-right: 30px; }
.toolbar button + button { margin-right: 22px; }
.toolbar button svg { display: block; width: 21px; height: 21px; }
.url { display: flex; flex: 1; align-items: center; gap: 20px; height: 35px; padding: 0 16px 0 18px; border-radius: 18px; background: #fff; }
.address { flex: 1; margin-left: -4px; overflow: hidden; white-space: nowrap; color: #888; font: 15px/20px "Open Sans", sans-serif; }
.address b { color: #333; font-weight: 400; }
.extensions { display: flex; flex: none; align-items: center; gap: 24px; padding: 0 18px 0 22px; }
.extensions svg { width: 26px; height: 26px; }
.vsep { width: 1px; height: 22px; background: #d5d5d5; margin: 0 -10px; }
.apphead .vsep { margin: 0; }
.bookmarks { display: flex; flex: none; align-items: center; justify-content: space-between; height: 35px; padding: 0 18px 8px 14px; font: 13px/20px "Noto Sans", sans-serif; white-space: nowrap; }
.bookmarks a { display: flex; align-items: center; gap: 8px; }
.bookmarks button { height: 20px; }

.viewport { display: flex; flex: 1; min-height: 0; }
.app { display: flex; flex: 1; flex-direction: column; min-width: 0; background: linear-gradient(160deg, #c9d5db, #dce3e9 55%, #e4e9ec); }
.apphead { display: flex; flex: none; align-items: center; gap: 8px; height: 44px; padding-right: 4px; border-top: 1px solid #ddd; border-bottom: 6px solid #84929a; background: #efefef; }
.apphead .logo { width: 27px; height: 36px; }
.apphead h1 { flex: 57; font: 700 19px/28px "Open Sans", sans-serif; color: #111; }
.apphead h1 span { color: #6f8da0; font-weight: 400; }
.records { flex: 50; }
.columns { display: grid; grid-template-columns: 236px 273px minmax(0, 1fr) 277px; flex: 1; min-height: 0; }

/* View menu */
.left { display: flex; flex-direction: column; min-height: 0; margin-top: -4px; position: relative; background: #e6ecef; }
.menu { flex: 1; border: 1px solid #445; border-width: 0 2px 2px 1px; background: #fff; color: #444; font: 13px/22px "Noto Sans", sans-serif; }
.menu a { display: block; height: 49px; padding: 13px 4px 0 7px; }
.menu a > svg { width: 17px; height: 17px; margin: 0 4px 0 5px; vertical-align: -4px; }
.menu a > svg.note { width: 16px; height: 16px; margin: 0; vertical-align: 0; }
.menu .home { padding-left: 20px; }
.menu .home svg { margin-right: 0; vertical-align: -1px; }
.menu .current { background: #add8e6; color: #222; }
.menu .two { height: 67px; padding-top: 10px; }
.banner { display: flex; align-items: center; gap: 12px; height: 57px; margin: 9px 3px 0 7px; padding-left: 26px; background: #1e4355; color: #fff; font: 700 17px/24px "Open Sans", sans-serif; border: 1px solid #0f3548; }
.banner > svg { width: 54px; height: 40px; }
.powered { flex-direction: column; align-items: flex-start; gap: 0; margin-top: 6px; padding: 2px 0 0 46px; position: relative; }
.powered .art { position: absolute; inset: 0; width: 100%; height: 100%; }
.powered .by { position: relative; font: italic 700 11px/16px "Open Sans", sans-serif; }
.powered .vant { position: relative; font: 700 18px/20px "Open Sans", sans-serif; }
.powered .vant span { display: inline-block; vertical-align: -8px; }
.left small { padding: 3px 0 0 1px; font: 13px/20px "Noto Sans", sans-serif; white-space: nowrap; }

/* Title list */
.titles { display: flex; flex-direction: column; min-height: 0; padding: 0 0 161px 1px; }
.titles h2 { height: 25px; padding-left: 5px; border-bottom: 2px solid #777; background: #fff; font: 14px/24px "Noto Sans", sans-serif; }
.count { height: 22px; padding-left: 1px; background: #fff; font-size: 14px; line-height: 22px; }
.scroller { display: flex; min-height: 0; overflow: hidden; }
.titles .scroller { flex: 1; }
.titles ul { display: flex; flex: 1; flex-direction: column; min-width: 0; list-style: none; background: #ff0; }
.titles li { display: flex; flex: 1; align-items: center; padding-left: 1px; overflow: hidden; border-bottom: 1px solid #ffff70; white-space: nowrap; }
.desc { margin-top: 14px; height: 74px; padding: 5px 4px; border: 3px solid #f6f64a; background: #fff; font-size: 14px; line-height: 21px; }

/* Scroll bars */
.sb { display: flex; flex: none; flex-direction: column; width: 17px; background: #e0e0e0; }
.sb svg { width: 17px; height: 18px; padding: 4px 3px; background: #eee; }
.sb svg:last-child { margin-top: auto; background: none; }
.thumb { flex: none; background: #6a8aa0; }
.t20 { height: 20px; }
.t97 { height: 97px; }
.t832 { height: 93%; max-height: 812px; }
.fill { flex: 1; margin-bottom: 4px; }
.page { width: 18px; margin-left: 1px; }

/* Charts */
.main { display: flex; min-width: 0; min-height: 0; margin: 0 4px 0 9px; border-left: 2px solid #a5adb2; background: #fff; overflow: hidden; }
.canvas { display: flex; flex: 1; flex-direction: column; min-width: 0; position: relative; }
.canvas > h2 { padding-top: 10px; height: 42px; text-align: center; color: #111; font: 700 20px/28px "Open Sans", sans-serif; }
.canvas u { text-decoration: underline #f4a0a0; text-underline-offset: 4px; }
.edit { position: absolute; top: 3px; right: 14px; }
.edit svg { display: block; width: 32px; height: 40px; }
.widgets { display: grid; grid-template: 458px minmax(0, 1fr) / 427px minmax(0, 1fr); flex: 1; min-height: 0; padding-left: 8px; }
.widget { min-width: 0; }
.tall { grid-row: 1 / 3; }
.tools { display: flex; flex-wrap: wrap; align-items: flex-start; gap: 9px 10px; width: 420px; padding: 2px 0 0 6px; }
.tools select { width: 221px; height: 31px; margin: 7px -10px 0 -5px; padding: 0 0 0 6px; border: 1px solid #d5d5d5; border-radius: 0; appearance: none; color: #555; font: 13px/20px "Noto Sans", sans-serif; background: linear-gradient(#777, #777) 200px 14px / 7px 2px no-repeat, linear-gradient(#777, #777) 202px 16px / 3px 2px no-repeat, linear-gradient(90deg, #fff 190px, #dedede 190px); }
.tools button { width: 37px; height: 37px; border: 1px solid #ccc; background: #fff; box-shadow: 4px 4px 1px #777; }
.tools button.on { box-shadow: none; }
.tools button svg { display: block; width: 35px; height: 35px; }
.chart { display: block; margin-top: 5px; overflow: hidden; }
.lbl { font: 13px "Liberation Sans", Arial, sans-serif; fill: #222; }
.map { display: block; margin-top: 34px; }
.legend { position: absolute; right: 0; bottom: 28px; width: 106px; height: 22px; border: 1px solid #ddd; background: #fff; }
.legend svg { display: block; width: 20px; height: 20px; }

/* Facet lists */
.right { padding: 0 3px 0 1px; }
.right section { margin-bottom: 17px; }
.pick { display: flex; align-items: center; height: 41px; margin-left: 2px; background: #fff; position: relative; }
.pick select { flex: 1; height: 100%; padding: 0 0 0 12px; border: 0; appearance: none; background: linear-gradient(#ddd, #ddd) right 42px center / 1px 22px no-repeat; color: #555; font: 14px/20px "Noto Sans", sans-serif; }
.pick svg { position: absolute; right: 14px; width: 14px; height: 10px; pointer-events: none; }
.right .scroller { height: 203px; border-top: 12px solid #d0d2d3; border-left: 2px solid #888; background: #fff; }
.right table { flex: 1; height: 204px; table-layout: fixed; border-collapse: collapse; align-self: flex-start; }
.right th, .right td { padding: 0; border-bottom: 1px solid #c4c4c4; overflow: hidden; text-align: left; white-space: nowrap; font: 14px/20px "Noto Sans", sans-serif; }
.right th { width: 34px; background: #d2d2d2; overflow: visible; }
.right td { padding-left: 2px; }
.right .hit td { background: #ff0; }

/* Browser side bar */
.edgebar { display: flex; flex: none; flex-direction: column; align-items: center; gap: 28px; width: 50px; padding: 16px 0 14px 0; }
.edgebar svg { display: block; width: 20px; height: 20px; }
.edgebar hr { width: 32px; margin: auto 0 -12px; border: 0; border-top: 2px solid #ddd; }

/* Long rows of list text */
.titles li, .count, .right th, .right td { font-size: 15px; }
.right th { font-size: 14px; }
```
